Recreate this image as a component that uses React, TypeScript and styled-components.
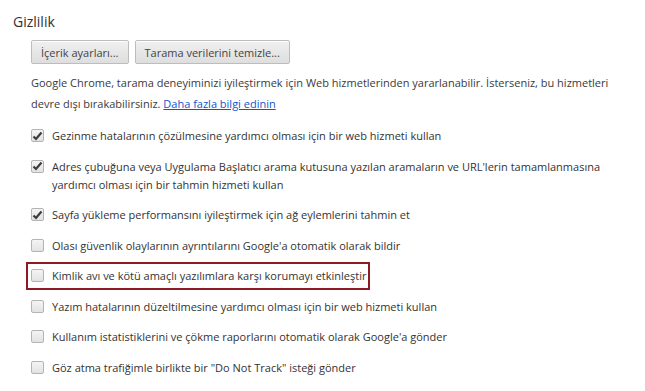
import React, { FC } from 'react';
import styled, { createGlobalStyle } from 'styled-components';

const GlobalStyle = createGlobalStyle`
    body {
        margin: 0;
        background: #ffffff;
        font-family: 'Open Sans', 'Noto Sans', sans-serif;
        color: #333333;
    }
`;

type Option = { label: string; checked: boolean; highlighted?: boolean };

const options: Option[] = [
    { label: 'Gezinme hatalarının çözülmesine yardımcı olması için bir web hizmeti kullan', checked: true },
    {
        label: "Adres çubuğuna veya Uygulama Başlatıcı arama kutusuna yazılan aramaların ve URL'lerin tamamlanmasına yardımcı olması için bir tahmin hizmeti kullan",
        checked: true,
    },
    { label: 'Sayfa yükleme performansını iyileştirmek için ağ eylemlerini tahmin et', checked: true },
    { label: "Olası güvenlik olaylarının ayrıntılarını Google'a otomatik olarak bildir", checked: false },
    { label: 'Kimlik avı ve kötü amaçlı yazılımlara karşı korumayı etkinleştir', checked: false, highlighted: true },
    { label: 'Yazım hatalarının düzeltilmesine yardımcı olması için bir web hizmeti kullan', checked: false },
    { label: "Kullanım istatistiklerini ve çökme raporlarını otomatik olarak Google'a gönder", checked: false },
    { label: 'Göz atma trafiğimle birlikte bir "Do Not Track" isteği gönder', checked: false },
];

const App: FC = () => {
    return (
        <>
            <GlobalStyle />
            <Section>
                <Title>Gizlilik</Title>
                <Body>
                    <Buttons>
                        <Button>İçerik ayarları...</Button>
                        <Button>Tarama verilerini temizle...</Button>
                    </Buttons>
                    <Intro>
                        Google Chrome, tarama deneyiminizi iyileştirmek için Web hizmetlerinden yararlanabilir. İsterseniz, bu hizmetleri
                        devre dışı bırakabilirsiniz. <Link href="#">Daha fazla bilgi edinin</Link>
                    </Intro>
                    <List>
                        {options.map((o) => (
                            <Row key={o.label} $highlighted={o.highlighted}>
                                <Box $checked={o.checked}>
                                    {o.checked && (
                                        <svg width="11" height="10" viewBox="0 0 11 10">
                                            <path d="M1.5 5.5 L4 8 L9.5 1.5" fill="none" stroke="#3c3c3c" strokeWidth="2.2" />
                                        </svg>
                                    )}
                                </Box>
                                <Label>{o.label}</Label>
                            </Row>
                        ))}
                    </List>
                </Body>
            </Section>
        </>
    );
};

const Section = styled.div`
    padding: 13px 0 0 13px;
    width: 632px;
`;

const Title = styled.h3`
    margin: 0;
    font-size: 14px;
    font-weight: 400;
    line-height: 18px;
    color: #303030;
`;

const Body = styled.div`
    padding-left: 18px;
`;

const Buttons = styled.div`
    display: flex;
    gap: 6px;
    margin-top: 9px;
`;

const Button = styled.button`
    height: 24px;
    padding: 0 9px;
    font-family: inherit;
    font-size: 11px;
    color: #444444;
    background: linear-gradient(#f0f0f0, #dedede);
    border: 1px solid #bdbdbd;
    border-radius: 2px;
    box-shadow: inset 0 1px 0 #ffffff;
`;

const Intro = styled.p`
    margin: 8px 0 0;
    font-size: 11px;
    line-height: 21px;
    color: #3a3a3a;
    width: 600px;
`;

const Link = styled.a`
    color: #1155cc;
    text-decoration: underline;
`;

const List = styled.div`
    display: flex;
    flex-direction: column;
    gap: 8.5px;
    margin-top: 11px;
    margin-left: -5px;
`;

const Row = styled.div<{ $highlighted?: boolean }>`
    display: flex;
    align-items: flex-start;
    gap: 8px;
    padding: 3px 2px 3px 3px;
    width: fit-content;
    max-width: 600px;
    border: 2px solid ${(p) => (p.$highlighted ? '#8e1b24' : 'transparent')};
    margin: -3px 0;
`;

const Box = styled.span<{ $checked: boolean }>`
    flex: none;
    width: 11px;
    height: 11px;
    margin-top: 2px;
    display: flex;
    align-items: center;
    justify-content: center;
    border: 1px solid #b4b4b4;
    border-radius: 2px;
    background: linear-gradient(#f4f4f4, #e2e2e2);
`;

const Label = styled.span`
    font-size: 11px;
    line-height: 18px;
    color: #333333;
`;

export default App;
